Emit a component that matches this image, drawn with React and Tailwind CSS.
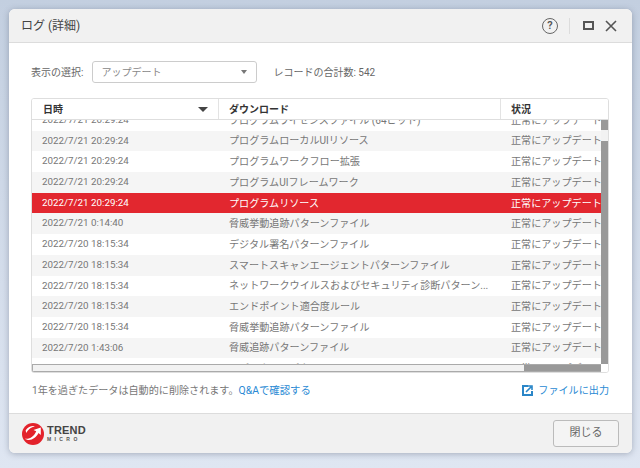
import React from 'react';

const ROWS = [
  ['2022/7/21 20:29:24', 'プログラムライセンスファイル (64ビット)'],
  ['2022/7/21 20:29:24', 'プログラムローカルUIリソース'],
  ['2022/7/21 20:29:24', 'プログラムワークフロー拡張'],
  ['2022/7/21 20:29:24', 'プログラムUIフレームワーク'],
  ['2022/7/21 20:29:24', 'プログラムリソース'],
  ['2022/7/21 0:14:40', '脅威挙動追跡パターンファイル'],
  ['2022/7/20 18:15:34', 'デジタル署名パターンファイル'],
  ['2022/7/20 18:15:34', 'スマートスキャンエージェントパターンファイル'],
  ['2022/7/20 18:15:34', 'ネットワークウイルスおよびセキュリティ診断パターン...'],
  ['2022/7/20 18:15:34', 'エンドポイント適合度ルール'],
  ['2022/7/20 18:15:34', '脅威挙動追跡パターンファイル'],
  ['2022/7/20 1:43:06', '脅威追跡パターンファイル'],
  ['2022/7/20 1:43:06', 'スパイウェアパターンファイル'],
];

const SELECTED = 4;

const TrendLogo = () => (
  <div className="flex items-center gap-[3px]">
    <svg width="22" height="22" viewBox="0 0 24 24">
      <circle cx="12" cy="12" r="12" fill="#e3222b" />
      <path d="M3 17 C8 18 13 15 15.5 9 L12.5 7.5 L20.5 5 L20.5 13 L18 11 C15 17 8 21 3 17 Z" fill="#fff" />
      <path d="M4 8 C7 4 10 3 14 3.5 C10 4.5 7 6.5 4.5 11 Z" fill="#fff" />
    </svg>
    <div className="flex flex-col items-start leading-none">
      <span className="text-[11px] font-bold tracking-[0.2px] text-[#444] font-['Liberation_Sans',sans-serif] leading-[11px]">TREND</span>
      <span className="text-[5px] font-bold tracking-[3.4px] text-[#555] font-['Liberation_Sans',sans-serif] leading-[6px]">MICRO</span>
    </div>
  </div>
);

export default function App() {
  return (
    <div className="w-[640px] h-[468px] overflow-hidden p-[9px] pr-[8px] bg-gradient-to-b from-[#c3cfe0] to-[#dfe6f2] font-['Roboto','Noto_Sans_CJK_JP',sans-serif]">
      <div className="w-[623px] h-[444px] flex flex-col rounded-[6px] overflow-hidden bg-white shadow-[0_1px_6px_rgba(60,70,90,0.35)]">
        {/* title bar */}
        <div className="h-[34px] shrink-0 flex items-center pl-[12px] pr-[15px] bg-[#f1f1f1] border-b border-[#dcdcdc]">
          <span className="text-[12px] text-[#444]">ログ (詳細)</span>
          <div className="ml-auto flex items-center">
            <div className="w-[16px] h-[16px] rounded-full border-[1.5px] border-[#666] text-[#555] text-[11px] font-semibold flex items-center justify-center leading-none">?</div>
            <div className="w-px h-[16px] bg-[#dcdcdc] ml-[11px] mr-[13px]" />
            <div className="w-[11px] h-[9px] border-[2px] border-[#555] mr-[11px]" />
            <svg width="12" height="12" viewBox="0 0 12 12">
              <path d="M1 1 L11 11 M11 1 L1 11" stroke="#555" strokeWidth="1.6" fill="none" />
            </svg>
          </div>
        </div>

        {/* body */}
        <div className="flex-1 flex flex-col pl-[22px] pr-[23px] pt-[18px]">
          <div className="flex items-center h-[22px]">
            <span className="text-[10px] text-[#666] mr-[9px]">表示の選択:</span>
            <div className="w-[165px] h-[22px] flex items-center pl-[8px] pr-[9px] border border-[#ccc] rounded-[3px] text-[10px] text-[#888]">
              アップデート
              <span className="ml-auto w-0 h-0 border-x-[3.5px] border-x-transparent border-t-[4px] border-t-[#777]" />
            </div>
            <span className="ml-[16px] text-[10px] text-[#666]">レコードの合計数: 542</span>
          </div>

          {/* table */}
          <div className="mt-[15px] h-[275px] flex flex-col border border-[#dedede] rounded-[3px] overflow-hidden">
            <div className="h-[21px] shrink-0 flex border-b border-[#dedede] text-[10px] font-bold text-[#333] bg-white">
              <div className="w-[187px] flex items-center pl-[11px] pr-[10px] border-r border-[#e3e3e3]">
                日時
                <span className="ml-auto w-0 h-0 border-x-[5px] border-x-transparent border-t-[5px] border-t-[#444]" />
              </div>
              <div className="w-[282px] flex items-center pl-[10px] border-r border-[#e3e3e3]">ダウンロード</div>
              <div className="flex-1 flex items-center pl-[10px]">状況</div>
            </div>
            <div className="flex-1 flex min-h-0">
              <div className="flex-1 flex flex-col min-w-0">
                <div className="flex-1 min-h-0 overflow-hidden">
                  <div className="-mt-[10px]">
                    {ROWS.map((r, i) => (
                      <div
                        key={i}
                        className={`h-[20.7px] flex items-center text-[10.1px] whitespace-nowrap ${
                          i === SELECTED ? 'bg-[#e2272f] text-white' : i % 2 === 1 ? 'bg-[#f5f5f5] text-[#777]' : 'bg-white text-[#777]'
                        }`}
                      >
                        <div className="w-[187px] shrink-0 pl-[10px] text-[9.8px]">{r[0]}</div>
                        <div className="w-[282px] shrink-0 pl-[10px]">{r[1]}</div>
                        <div className="flex-1 pl-[10px] overflow-hidden">正常にアップデート</div>
                      </div>
                    ))}
                  </div>
                </div>
                <div className="h-[8px] shrink-0 flex border border-[#aaa] border-r-0 bg-[#f2f2f2]">
                  <div className="w-[491px] shrink-0" />
                  <div className="flex-1 bg-[#999]" />
                </div>
              </div>
              <div className="w-[7px] shrink-0 flex flex-col">
                <div className="h-[10px] bg-[#999]" />
                <div className="h-[11px] bg-[#f2f2f2]" />
                <div className="flex-1 bg-[#999]" />
                <div className="h-[8px] bg-white" />
              </div>
            </div>
          </div>

          <div className="flex items-center mt-[10px] text-[10.1px]">
            <span className="text-[#777] ml-px">1年を過ぎたデータは自動的に削除されます。</span>
            <span className="text-[#2a8ad4] text-[10.4px]">Q&amp;Aで確認する</span>
            <span className="ml-auto flex items-center gap-[5px] text-[#2a8ad4]">
              <svg width="11" height="11" viewBox="0 0 11 11">
                <path d="M6 1 H1 V10 H10 V6" stroke="#2a86c8" strokeWidth="2" fill="none" />
                <path d="M4 7 L9 2 M6 1 H10 V5" stroke="#2a86c8" strokeWidth="1.6" fill="none" />
              </svg>
              ファイルに出力
            </span>
          </div>
        </div>

        {/* footer */}
        <div className="relative h-[40px] shrink-0 flex items-center pl-[13px] pr-[13px] bg-[#f1f1f1] border-t border-[#dcdcdc]">
          <TrendLogo />
          <button className="ml-auto w-[66px] h-[27px] border border-[#bbb] rounded-[3px] bg-[#f4f4f4] text-[11px] text-[#666]">閉じる</button>
        </div>
      </div>
    </div>
  );
}
